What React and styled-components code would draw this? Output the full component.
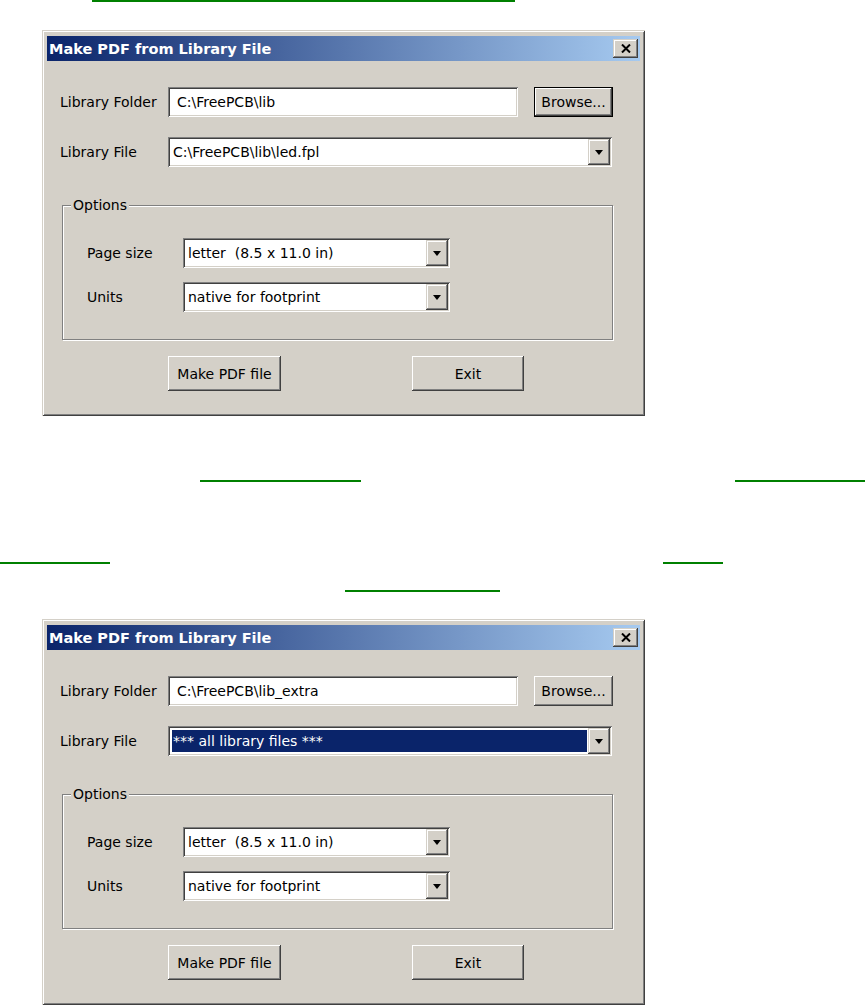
import React from "react";
import styled, { createGlobalStyle, css } from "styled-components";

const GlobalStyle = createGlobalStyle`
  html, body {
    margin: 0;
    padding: 0;
    background: #fff;
  }
  body {
    font-family: "DejaVu Sans", Verdana, sans-serif;
  }
`;

// classic 3D bevels
const raised = css`
  box-shadow: inset -1px -1px 0 #404040, inset 1px 1px 0 #fff,
    inset -2px -2px 0 #808080, inset 2px 2px 0 #d4d0c8;
`;

const raisedSmall = css`
  box-shadow: inset -1px -1px 0 #404040, inset 1px 1px 0 #d4d0c8,
    inset -2px -2px 0 #808080, inset 2px 2px 0 #fff;
`;

const sunken = css`
  box-shadow: inset 1px 1px 0 #808080, inset -1px -1px 0 #fff,
    inset 2px 2px 0 #404040, inset -2px -2px 0 #d4d0c8;
`;

const Page = styled.div`
  width: 865px;
  height: 1006px;
  overflow: hidden;
  display: flex;
  flex-direction: column;
`;

const LinkRow = styled.div`
  display: flex;
  height: 2px;
  margin-top: ${(p) => p.$top || 0}px;
`;

const Underline = styled.a`
  display: block;
  height: 2px;
  width: ${(p) => p.$width}px;
  margin-left: ${(p) => p.$left}px;
  background: #008000;
`;

const Dialog = styled.div`
  box-sizing: border-box;
  width: 603px;
  height: 386px;
  margin: ${(p) => p.$top}px 0 0 42px;
  padding: 6px 5px 4px 5px;
  background: #d4d0c8;
  box-shadow: inset 1px 1px 0 #d4d0c8, inset -1px -1px 0 #404040,
    inset 2px 2px 0 #fff, inset -2px -2px 0 #808080;
  display: flex;
  flex-direction: column;
  font-size: 14px;
  color: #000;
`;

const TitleBar = styled.div`
  height: 25px;
  display: flex;
  align-items: center;
  justify-content: space-between;
  padding: 0 2px;
  background: linear-gradient(to right, #0a246a, #a6caf0);
`;

const TitleText = styled.span`
  color: #fff;
  font-weight: bold;
  font-size: 14.5px;
  white-space: nowrap;
`;

const CloseButton = styled.button`
  box-sizing: border-box;
  width: 25px;
  height: 19px;
  padding: 0;
  border: none;
  background: #d4d0c8;
  display: flex;
  align-items: center;
  justify-content: center;
  ${raisedSmall}
`;

const Body = styled.div`
  display: flex;
  flex-direction: column;
  padding-left: 13px;
`;

const FieldRow = styled.div`
  display: flex;
  align-items: center;
  margin-top: ${(p) => p.$top || 0}px;
`;

const Label = styled.label`
  flex-shrink: 0;
  width: ${(p) => p.$width}px;
  white-space: nowrap;
`;

const Edit = styled.div`
  box-sizing: border-box;
  width: ${(p) => p.$width}px;
  height: 30px;
  padding-left: 9px;
  display: flex;
  align-items: center;
  background: #fff;
  white-space: pre;
  ${sunken}
`;

const Combo = styled.div`
  box-sizing: border-box;
  width: ${(p) => p.$width}px;
  height: 30px;
  padding: 2px;
  display: flex;
  background: #fff;
  ${sunken}
`;

const ComboValue = styled.div`
  flex: 1;
  display: flex;
  align-items: center;
  white-space: pre;
  padding-left: ${(p) => (p.$selected ? 1 : 3)}px;
  margin: ${(p) => (p.$selected ? "2px 1px 2px 2px" : "0")};
  background: ${(p) => (p.$selected ? "#0a246a" : "transparent")};
  color: ${(p) => (p.$selected ? "#fff" : "#000")};
`;

const DropButton = styled.div`
  box-sizing: border-box;
  width: 22px;
  display: flex;
  align-items: center;
  justify-content: center;
  background: #d4d0c8;
  ${raisedSmall}
`;

const PushButton = styled.button`
  box-sizing: border-box;
  width: ${(p) => p.$width}px;
  height: ${(p) => p.$height}px;
  margin-left: ${(p) => p.$left || 0}px;
  padding: 0;
  border: ${(p) => (p.$default ? "1px solid #000" : "none")};
  background: #d4d0c8;
  font-family: "DejaVu Sans", Verdana, sans-serif;
  font-size: 14px;
  color: #000;
  white-space: nowrap;
  ${raised}
`;

const GroupBox = styled.div`
  position: relative;
  box-sizing: border-box;
  width: 551px;
  height: 135px;
  margin: 38px 0 0 2px;
  padding: 32px 0 0 24px;
  border: 1px solid #808080;
  box-shadow: inset 1px 1px 0 #fff, 1px 1px 0 #fff;
  display: flex;
  flex-direction: column;
  gap: 14px;
`;

const GroupLegend = styled.span`
  position: absolute;
  top: -9px;
  left: 8px;
  padding: 0 2px;
  line-height: 16px;
  background: #d4d0c8;
`;

const ButtonRow = styled.div`
  display: flex;
  margin-top: 16px;
  margin-left: -13px;
`;

const CloseGlyph = () => (
  <svg width="10" height="9" viewBox="0 0 10 9">
    <path d="M1 0.5 L9 8.5 M9 0.5 L1 8.5" stroke="#000" strokeWidth="2" />
  </svg>
);

const ArrowGlyph = () => (
  <svg width="8" height="5" viewBox="0 0 8 5">
    <path d="M0 0 H8 L4 5 Z" fill="#000" />
  </svg>
);

const ComboBox = ({ width, value, selected }) => (
  <Combo $width={width}>
    <ComboValue $selected={selected}>{value}</ComboValue>
    <DropButton>
      <ArrowGlyph />
    </DropButton>
  </Combo>
);

const MakePdfDialog = ({ top, folder, file, selected, browseDefault }) => (
  <Dialog $top={top}>
    <TitleBar>
      <TitleText>Make PDF from Library File</TitleText>
      <CloseButton>
        <CloseGlyph />
      </CloseButton>
    </TitleBar>
    <Body>
      <FieldRow $top={26}>
        <Label $width={108}>Library Folder</Label>
        <Edit $width={350}>{folder}</Edit>
        <PushButton $width={79} $height={30} $left={16} $default={browseDefault}>
          Browse...
        </PushButton>
      </FieldRow>
      <FieldRow $top={20}>
        <Label $width={108}>Library File</Label>
        <ComboBox width={444} value={file} selected={selected} />
      </FieldRow>
      <GroupBox>
        <GroupLegend>Options</GroupLegend>
        <FieldRow>
          <Label $width={96}>Page size</Label>
          <ComboBox width={267} value="letter  (8.5 x 11.0 in)" />
        </FieldRow>
        <FieldRow>
          <Label $width={96}>Units</Label>
          <ComboBox width={267} value="native for footprint" />
        </FieldRow>
      </GroupBox>
      <ButtonRow>
        <PushButton $width={113} $height={35} $left={121}>
          Make PDF file
        </PushButton>
        <PushButton $width={112} $height={35} $left={131}>
          Exit
        </PushButton>
      </ButtonRow>
    </Body>
  </Dialog>
);

const App = () => (
  <Page>
    <GlobalStyle />
    <LinkRow>
      <Underline $left={92} $width={423} />
    </LinkRow>
    <MakePdfDialog
      top={28}
      folder="C:\FreePCB\lib"
      file="C:\FreePCB\lib\led.fpl"
      browseDefault
    />
    <LinkRow $top={64}>
      <Underline $left={200} $width={161} />
      <Underline $left={374} $width={130} />
    </LinkRow>
    <LinkRow $top={80}>
      <Underline $left={0} $width={110} />
      <Underline $left={553} $width={60} />
    </LinkRow>
    <LinkRow $top={26}>
      <Underline $left={345} $width={155} />
    </LinkRow>
    <MakePdfDialog
      top={27}
      folder="C:\FreePCB\lib_extra"
      file="*** all library files ***"
      selected
    />
  </Page>
);

export default App;
